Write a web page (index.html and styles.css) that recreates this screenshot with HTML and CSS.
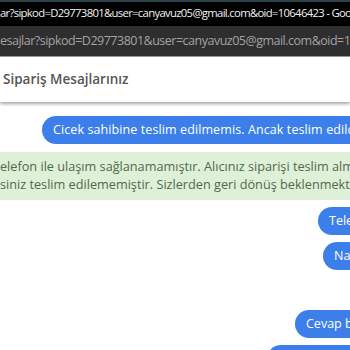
FILE: index.html
```html
<!DOCTYPE html>
<html lang="tr">
<head>
<meta charset="utf-8">
<link rel="stylesheet" href="styles.css">
</head>
<body>
<div class="titlebar">ar?sipkod=D29773801&amp;user=canyavuz05@gmail.com&amp;oid=10646423 - Google Chrome</div>
<div class="addressbar">esajlar?sipkod=D29773801&amp;user=canyavuz05@gmail.com&amp;oid=10646423</div>
<div class="header">Sipariş Mesajlarınız</div>
<div class="chat">
  <div class="bubble b1">Cicek sahibine teslim edilmemis. Ancak teslim edildi</div>
  <div class="note">elefon ile ulaşım sağlanamamıştır. Alıcınız siparişi teslim almamıştır<br>siniz teslim edilememiştir. Sizlerden geri dönüş beklenmektedir.</div>
  <div class="bubble b2">Telefon</div>
  <div class="bubble b3">Na</div>
  <div class="bubble b4">Cevap b</div>
  <div class="bubble b5">&nbsp;</div>
</div>
</body>
</html>
```
FILE: styles.css
```css
html, body {
  margin: 0;
  padding: 0;
  background: #fff;
  overflow: hidden;
  width: 350px;
  height: 350px;
  font-family: "Open Sans", "Noto Sans", sans-serif;
}
.titlebar {
  height: 24px;
  border-top: 2px solid #2a4449;
  background: #000;
  color: #f2f2f2;
  font-size: 11.3px;
  letter-spacing: -0.68px;
  line-height: 21px;
  white-space: nowrap;
  overflow: hidden;
}
.addressbar {
  height: 30px;
  background: #2e2e2e;
  color: #a3a3a3;
  font-size: 12.5px;
  letter-spacing: -0.5px;
  line-height: 30px;
  white-space: nowrap;
  overflow: hidden;
  border-bottom: 1px solid #9a9a9a;
}
.header {
  height: 45px;
  background: #fff;
  color: #555;
  font-weight: 600;
  font-size: 13.5px;
  line-height: 44px;
  padding-left: 3px;
  box-shadow: 0 2px 3px rgba(0,0,0,0.35);
  position: relative;
}
.chat {
  width: 400px;
  display: flex;
  flex-direction: column;
  padding-top: 14px;
}
.bubble {
  background: #3c7fea;
  color: #fff;
  font-size: 12.5px;
  height: 28px;
  line-height: 28px;
  border-radius: 14px;
  padding-left: 11px;
  white-space: nowrap;
  overflow: hidden;
  box-sizing: border-box;
}
.b1 { margin-left: 42px; letter-spacing: 0.1px; }
.b2 { margin-left: 318px; margin-top: 7px; }
.b3 { margin-left: 323px; margin-top: 7px; }
.b4 { margin-left: 295px; margin-top: 40px; }
.b5 { margin-left: 267px; margin-top: 7px; }
.note {
  margin-top: 8px;
  width: 350px;
  background: #dff0d8;
  color: #4f6a49;
  font-size: 12.7px;
  line-height: 18px;
  padding: 5px 0 7px 0;
  white-space: nowrap;
  overflow: hidden;
}
```
